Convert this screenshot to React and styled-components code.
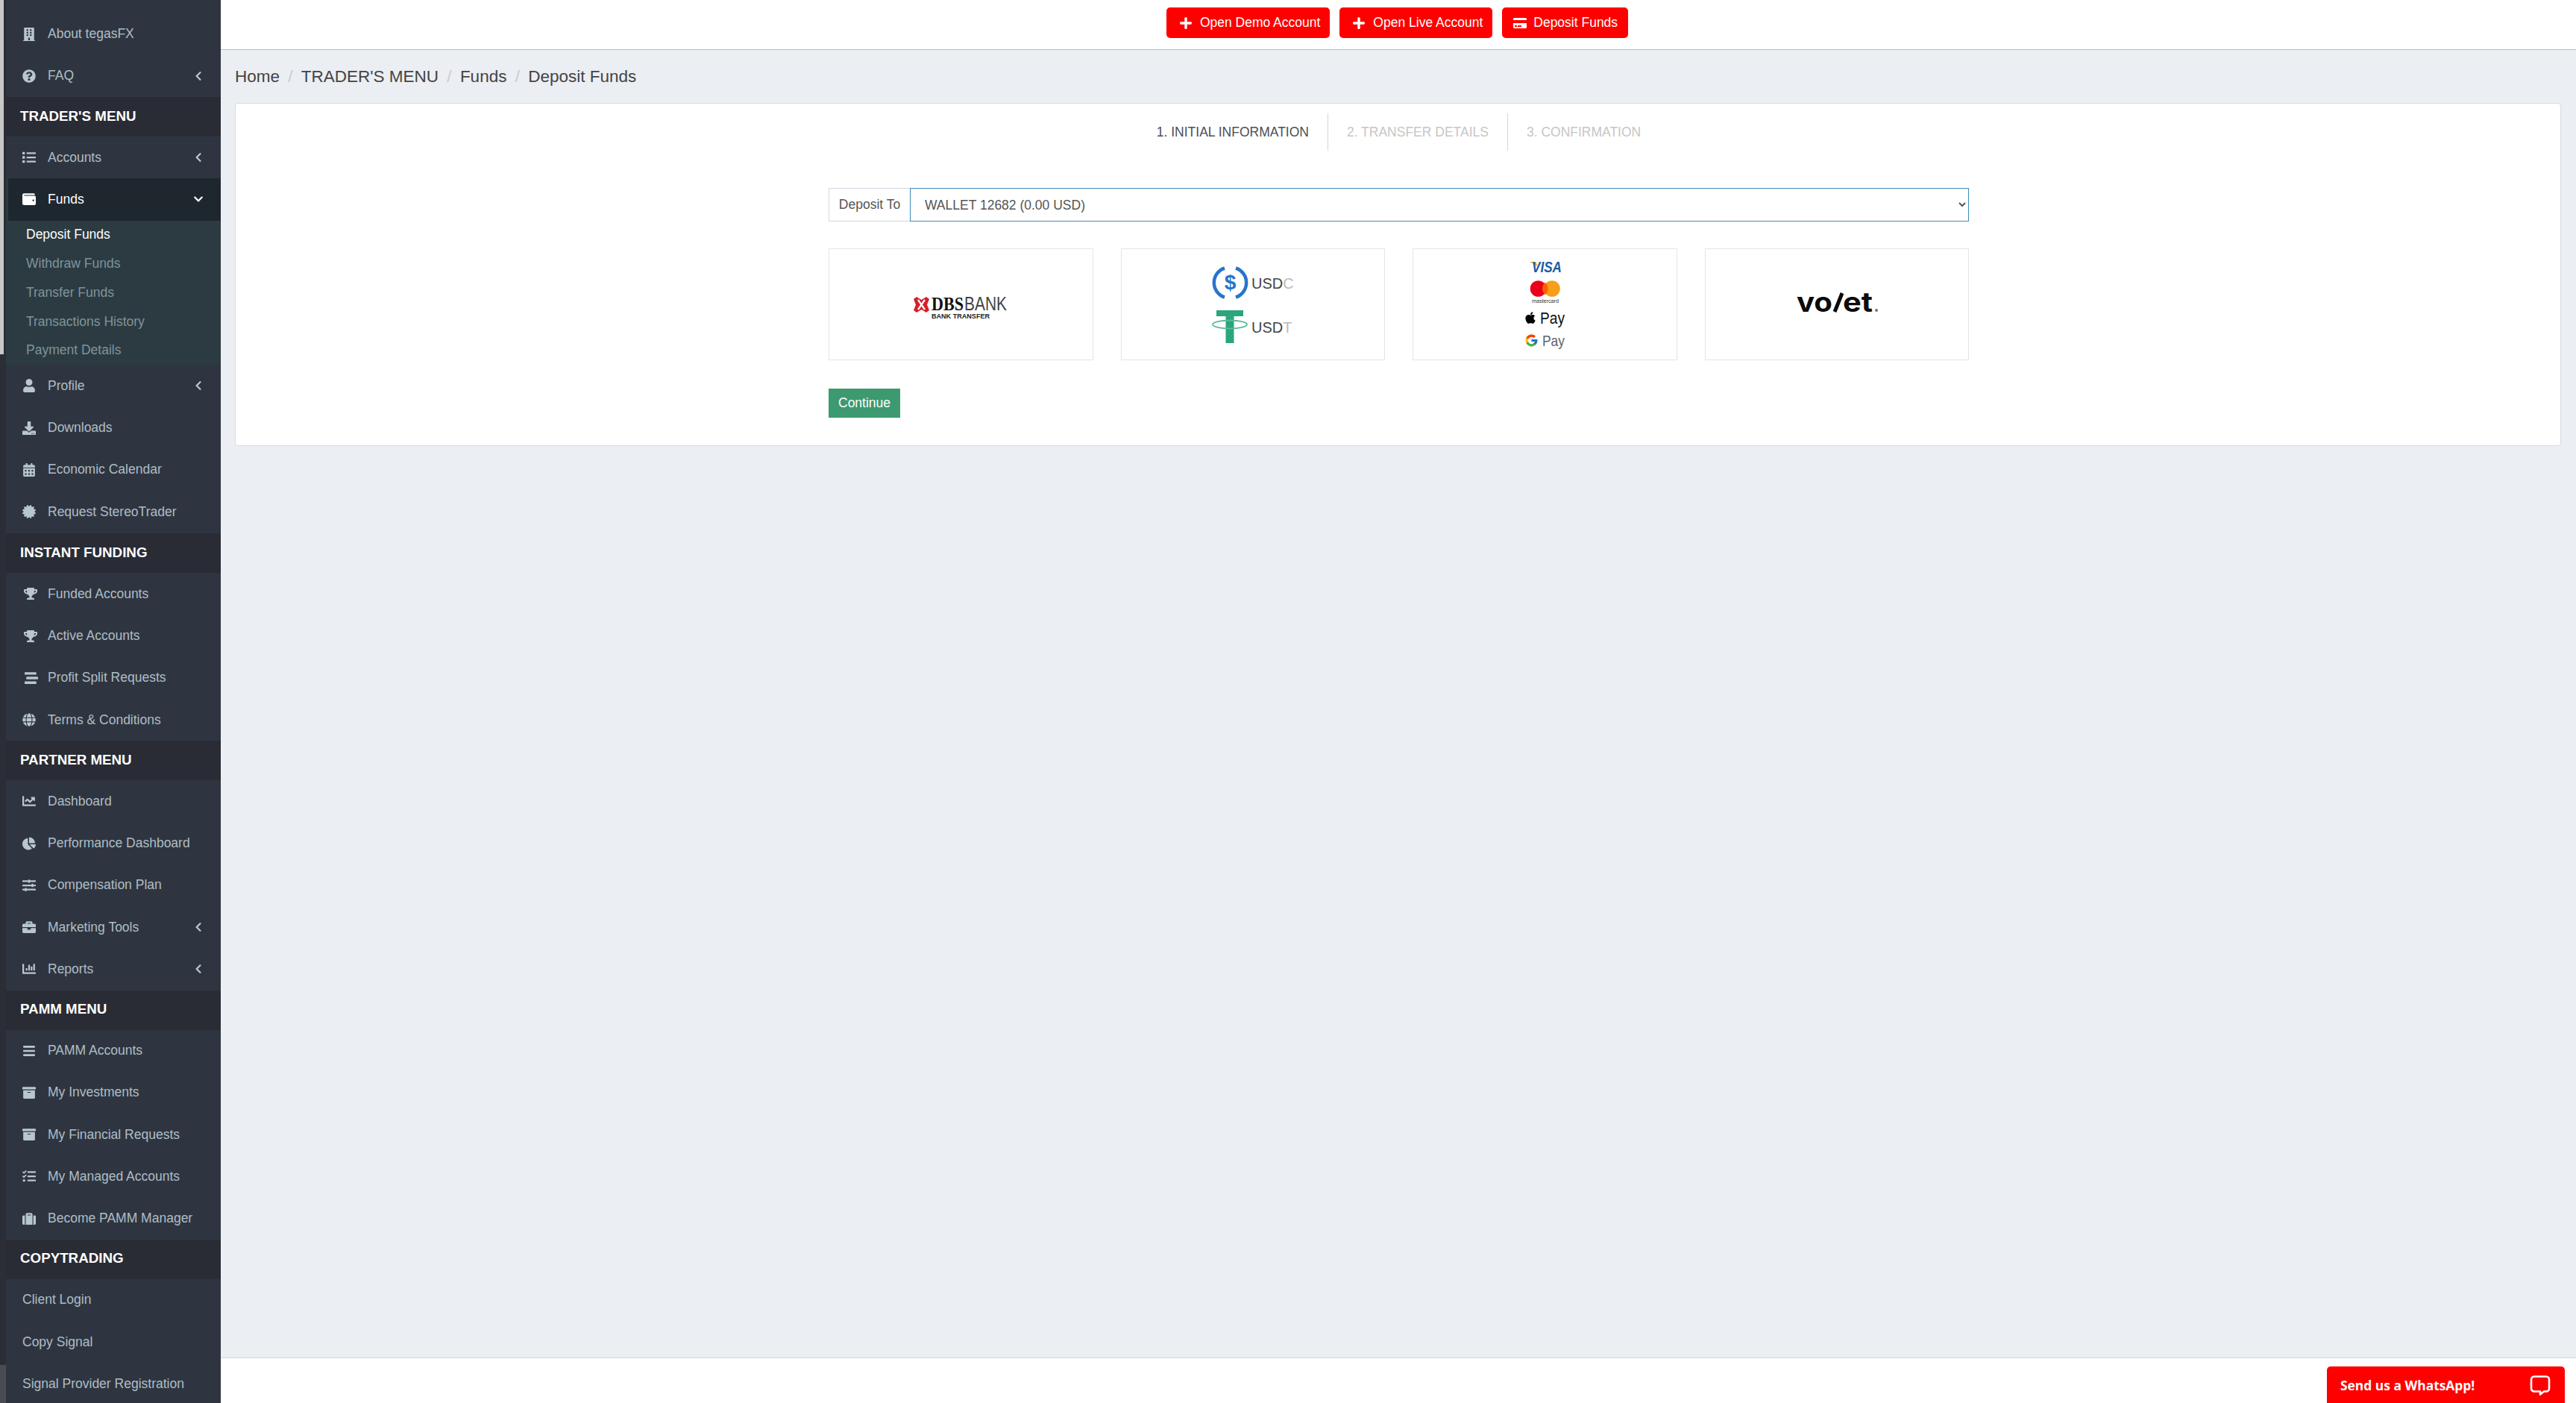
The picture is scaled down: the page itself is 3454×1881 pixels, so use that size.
import React from "react";
import styled, { createGlobalStyle } from "styled-components";
import {
  FaBuilding, FaQuestionCircle, FaChevronLeft, FaChevronDown, FaList, FaWallet, FaUser,
  FaDownload, FaCalendarAlt, FaCertificate, FaTrophy, FaStream, FaGlobe, FaChartLine,
  FaChartPie, FaSlidersH, FaBriefcase, FaChartBar, FaBars, FaArchive, FaTasks, FaSuitcase,
  FaPlus, FaCreditCard, FaApple,
} from "react-icons/fa";
import { FcGoogle } from "react-icons/fc";

const GlobalStyle = createGlobalStyle`
  html, body {
    margin: 0;
    height: 100%;
    overflow: hidden;
    background: #ebeef3;
    font-family: "Liberation Sans", Arial, sans-serif;
  }
`;

const Page = styled.div`
  display: flex;
  height: 1881px;
  overflow: hidden;
`;

const Rail = styled.div`
  width: 8px;
  flex: none;
  display: flex;
  flex-direction: column;
  justify-content: space-between;
  background: #2b2e36;
`;

const RailThumb = styled.div`
  width: ${(p) => p.$w}px;
  height: ${(p) => p.$h}px;
  background: ${(p) => p.$color};
`;

const Sidebar = styled.nav`
  width: 288px;
  flex: none;
  box-sizing: border-box;
  padding-top: 17.5px;
  background: #2f3540;
  overflow: hidden;
  font-size: 17.5px;
`;

const Section = styled.div`
  height: 53px;
  box-sizing: border-box;
  margin-top: ${(p) => p.$offset || 0}px;
  padding: 0 0 2px 19px;
  display: flex;
  align-items: center;
  background: #292c34;
  color: #fff;
  font-size: 18.75px;
  font-weight: 700;
`;

const Row = styled.a`
  height: 56.25px;
  box-sizing: border-box;
  display: flex;
  align-items: center;
  padding-left: ${(p) => (p.$active ? 19 : 22)}px;
  padding-right: 23px;
  color: ${(p) => (p.$active ? "#fff" : "#aebdc6")};
  background: ${(p) => (p.$active ? "#1f272e" : "transparent")};
  border-left: ${(p) => (p.$active ? "3px solid #2c3b41" : "none")};
`;

const IconSlot = styled.span`
  width: 34px;
  padding-left: ${(p) => p.$indent || 0}px;
  box-sizing: border-box;
  flex: none;
  display: flex;
  align-items: center;
  color: ${(p) => (p.$active ? "#fff" : "#b8c7ce")};

  svg {
    height: 18px;
    width: auto;
  }
`;

const Caret = styled.span`
  margin-left: auto;
  display: flex;
  color: ${(p) => (p.$active ? "#fff" : "#b8c7ce")};

  svg {
    height: 14px;
    width: auto;
  }
`;

const SubMenu = styled.div`
  background: #2c3b41;
  padding-left: 27px;
`;

const SubItem = styled.a`
  height: 38.75px;
  display: flex;
  align-items: center;
  color: ${(p) => (p.$active ? "#fff" : "#80939c")};
`;

const Main = styled.div`
  flex: 1;
  min-width: 0;
  display: flex;
  flex-direction: column;
  background: #ebeef3;
`;

const Header = styled.header`
  height: 67px;
  box-sizing: border-box;
  padding: 10px 3px 0 0;
  display: flex;
  justify-content: center;
  gap: 13px;
  background: #fff;
  border-bottom: 1px solid #b9bcc1;
`;

const RedButton = styled.button`
  height: 41px;
  box-sizing: border-box;
  padding: 0 ${(p) => (p.$tight ? 14 : 13)}px 0 ${(p) => (p.$tight ? 15 : 17)}px;
  display: flex;
  align-items: center;
  gap: ${(p) => (p.$tight ? 9 : 10)}px;
  background: #f00;
  color: #fff;
  border: none;
  border-radius: 5px;
  font: 17.5px "Liberation Sans", Arial, sans-serif;

  svg {
    height: 18px;
    width: auto;
  }
`;

const Content = styled.main`
  flex: 1;
  padding: 0 20px 0 19px;
`;

const Breadcrumb = styled.div`
  height: 71px;
  display: flex;
  align-items: center;
  font-size: 22.5px;
  color: #444;
`;

const Slash = styled.span`
  color: #ccc;
  padding: 0 11.25px;
`;

const Panel = styled.section`
  box-sizing: border-box;
  height: 460px;
  padding: 13px 0 0 2px;
  background: #fff;
  border: 1px solid #d7dae0;
  border-radius: 4px;
`;

const Steps = styled.div`
  display: flex;
  justify-content: center;
`;

const Step = styled.div`
  height: 50px;
  padding: 0 25px;
  display: flex;
  align-items: center;
  font-size: 17.5px;
  color: ${(p) => (p.$current ? "#4a4f58" : "#c6c6c6")};
  border-right: ${(p) => (p.$last ? "none" : "1px solid #d2d6de")};
`;

const Form = styled.form`
  width: 1529px;
  margin: 50px auto 0;
`;

const InputGroup = styled.div`
  display: flex;
  height: 45px;
`;

const Addon = styled.label`
  width: 109px;
  box-sizing: border-box;
  flex: none;
  display: flex;
  align-items: center;
  justify-content: center;
  font-size: 17.5px;
  color: #555;
  border: 1px solid #d2d6de;
  border-right: none;
`;

const Select = styled.select`
  flex: 1;
  box-sizing: border-box;
  padding: 0 15px;
  background: #fff;
  border: 1px solid #3c8dbc;
  border-radius: 0;
  outline: none;
  font: 17.5px "Liberation Sans", Arial, sans-serif;
  color: #555;
`;

const Cards = styled.div`
  margin-top: 36px;
  display: grid;
  grid-template-columns: repeat(4, 1fr);
  gap: 37px;
`;

const Card = styled.div`
  height: 150px;
  display: flex;
  align-items: center;
  justify-content: center;
  border: 1px solid #e4e5e8;
  box-sizing: border-box;
`;

const Continue = styled.button`
  margin-top: 38px;
  height: 39px;
  padding: 0 13px;
  background: #3d9970;
  color: #fff;
  border: none;
  font: 17.5px "Liberation Sans", Arial, sans-serif;
`;

const Footer = styled.footer`
  height: 61px;
  box-sizing: border-box;
  padding-right: 15px;
  display: flex;
  justify-content: flex-end;
  align-items: flex-end;
  background: #fff;
  border-top: 1px solid #d2d6de;
`;

const ChatButton = styled.div`
  width: 319px;
  height: 49px;
  box-sizing: border-box;
  padding: 0 19px 0 18px;
  display: flex;
  align-items: center;
  justify-content: space-between;
  background: #f00;
  color: #fff;
  border-radius: 5px 5px 0 0;
  font: 700 17.4px "Open Sans", sans-serif;
`;

const LogoText = styled.text`
  font-family: ${(p) => p.$font || '"Liberation Sans"'}, Arial, sans-serif;
`;

const menu = [
  { label: "About tegasFX", icon: FaBuilding },
  { label: "FAQ", icon: FaQuestionCircle, caret: true },
  { section: "TRADER'S MENU" },
  { label: "Accounts", icon: FaList, caret: true },
  { label: "Funds", icon: FaWallet, active: true },
  { label: "Profile", icon: FaUser, caret: true },
  { label: "Downloads", icon: FaDownload },
  { label: "Economic Calendar", icon: FaCalendarAlt },
  { label: "Request StereoTrader", icon: FaCertificate },
  { section: "INSTANT FUNDING", offset: 1 },
  { label: "Funded Accounts", icon: FaTrophy, indent: 2 },
  { label: "Active Accounts", icon: FaTrophy, indent: 2 },
  { label: "Profit Split Requests", icon: FaStream, indent: 3 },
  { label: "Terms & Conditions", icon: FaGlobe },
  { section: "PARTNER MENU" },
  { label: "Dashboard", icon: FaChartLine },
  { label: "Performance Dashboard", icon: FaChartPie },
  { label: "Compensation Plan", icon: FaSlidersH },
  { label: "Marketing Tools", icon: FaBriefcase, caret: true },
  { label: "Reports", icon: FaChartBar, caret: true },
  { section: "PAMM MENU" },
  { label: "PAMM Accounts", icon: FaBars },
  { label: "My Investments", icon: FaArchive },
  { label: "My Financial Requests", icon: FaArchive },
  { label: "My Managed Accounts", icon: FaTasks },
  { label: "Become PAMM Manager", icon: FaSuitcase },
  { section: "COPYTRADING" },
  { label: "Client Login" },
  { label: "Copy Signal" },
  { label: "Signal Provider Registration" },
];

const fundsMenu = ["Deposit Funds", "Withdraw Funds", "Transfer Funds", "Transactions History", "Payment Details"];

const DbsLogo = () => (
  <svg width="170" height="80" viewBox="1203 368 170 80">
    <path d="M1225 401l4-3 6.500 4 6.500-4 4 3-3 7.500 3 7.500-4 3-6.500-4-6.500 4-4-3 3-7.500z" fill="#d71e28" />
    <path d="M1231 402l9 13M1240 402l-9 13" stroke="#fff" strokeWidth="2.200" />
    <LogoText $font='"Liberation Serif"' x="1249" y="416" fontSize="25" fontWeight="700" fill="#111" textLength="43" lengthAdjust="spacingAndGlyphs">DBS</LogoText>
    <LogoText x="1293" y="416" fontSize="25" fill="#444" textLength="57" lengthAdjust="spacingAndGlyphs">BANK</LogoText>
    <LogoText x="1249" y="427" fontSize="9.500" fontWeight="700" fill="#222" textLength="78" lengthAdjust="spacingAndGlyphs">BANK TRANSFER</LogoText>
  </svg>
);

const CryptoLogo = () => (
  <svg width="140" height="125" viewBox="1610 345 140 125">
    <g fill="none" stroke="#2775ca" strokeWidth="4.500">
      <path d="M1642 358.500A20.500 20.500 0 0 0 1642 397.500" />
      <path d="M1657 358.500A20.500 20.500 0 0 1 1657 397.500" />
    </g>
    <LogoText x="1649.500" y="387" fontSize="28" fontWeight="700" fill="#2775ca" textAnchor="middle">$</LogoText>
    <LogoText x="1678" y="386" fontSize="20" fill="#444">USD<tspan fill="#bbb">C</tspan></LogoText>
    <path d="M1631 415h36v8h-12.500v36h-11v-36h-12.500z" fill="#2ba57c" />
    <ellipse cx="1649" cy="434" rx="23" ry="5.500" fill="none" stroke="#5cbb9a" strokeWidth="1.800" />
    <LogoText x="1678" y="445" fontSize="20" fill="#444">USD<tspan fill="#bbb">T</tspan></LogoText>
  </svg>
);

const CardsLogo = () => (
  <svg width="100" height="135" viewBox="2020 340 100 135">
    <path d="M2050 350h8l3 6z" fill="#f2a91d" />
    <LogoText x="2053" y="364" fontSize="20" fontWeight="700" fontStyle="italic" fill="#1a5ba6" textLength="40" lengthAdjust="spacingAndGlyphs">VISA</LogoText>
    <circle cx="2061.500" cy="386" r="10.800" fill="#eb001b" />
    <circle cx="2080" cy="386" r="10.800" fill="#f79e1b" />
    <path d="M2070.800 377.800a10.800 10.800 0 0 1 0 16.400a10.800 10.800 0 0 1 0-16.400z" fill="#ff5f00" />
    <LogoText x="2053" y="405" fontSize="7" fill="#333" textLength="36" lengthAdjust="spacingAndGlyphs">mastercard</LogoText>
    <FaApple x={2042} y={416} size={18} color="#000" />
    <LogoText x="2064" y="433" fontSize="22" fill="#111" textLength="33" lengthAdjust="spacingAndGlyphs">Pay</LogoText>
    <FcGoogle x={2043} y={446} size={19} />
    <LogoText x="2067" y="463" fontSize="21" fill="#5f6368" textLength="30" lengthAdjust="spacingAndGlyphs">Pay</LogoText>
  </svg>
);

const VoletLogo = () => (
  <svg width="120" height="50" viewBox="2403 383 120 50">
    <LogoText $font="Inter" x="2409" y="418" fontSize="36" fontWeight="700" fill="#0b0b0b" textLength="48" lengthAdjust="spacingAndGlyphs">vo</LogoText>
    <path d="M2460 418l10-25" stroke="#0b0b0b" strokeWidth="5" />
    <LogoText $font="Inter" x="2471" y="418" fontSize="36" fontWeight="700" fill="#0b0b0b" textLength="40" lengthAdjust="spacingAndGlyphs">et</LogoText>
    <circle cx="2516" cy="416" r="2" fill="#777" />
  </svg>
);

const ChatIcon = () => (
  <svg width="28" height="28" viewBox="0 0 28 28" fill="none" stroke="#fff" strokeWidth="2.600" strokeLinejoin="round">
    <path d="M6 2.500h16a4 4 0 0 1 4 4v12a4 4 0 0 1-4 4h-3l-5 4v-4H6a4 4 0 0 1-4-4v-12a4 4 0 0 1 4-4z" />
  </svg>
);

const SideMenu = () => (
  <Sidebar>
    {menu.map((item) => {
      if (item.section) {
        return <Section key={item.section} $offset={item.offset}>{item.section}</Section>;
      }
      const Icon = item.icon;
      return (
        <React.Fragment key={item.label}>
          <Row $active={item.active}>
            {Icon && (
              <IconSlot $active={item.active} $indent={item.indent}>
                <Icon />
              </IconSlot>
            )}
            {item.label}
            {item.caret && <Caret><FaChevronLeft /></Caret>}
            {item.active && <Caret $active><FaChevronDown /></Caret>}
          </Row>
          {item.active && (
            <SubMenu>
              {fundsMenu.map((name, i) => (
                <SubItem key={name} $active={i === 0}>{name}</SubItem>
              ))}
            </SubMenu>
          )}
        </React.Fragment>
      );
    })}
  </Sidebar>
);

export default function App() {
  return (
    <Page>
      <GlobalStyle />
      <Rail>
        <RailThumb $w={5} $h={475} $color="#c8c8c8" />
        <RailThumb $w={8} $h={51} $color="#4a4c54" />
      </Rail>
      <SideMenu />
      <Main>
        <Header>
          <RedButton><FaPlus />Open Demo Account</RedButton>
          <RedButton><FaPlus />Open Live Account</RedButton>
          <RedButton $tight><FaCreditCard />Deposit Funds</RedButton>
        </Header>
        <Content>
          <Breadcrumb>
            Home<Slash>/</Slash>TRADER'S MENU<Slash>/</Slash>Funds<Slash>/</Slash>Deposit Funds
          </Breadcrumb>
          <Panel>
            <Steps>
              <Step $current>1. INITIAL INFORMATION</Step>
              <Step>2. TRANSFER DETAILS</Step>
              <Step $last>3. CONFIRMATION</Step>
            </Steps>
            <Form>
              <InputGroup>
                <Addon>Deposit To</Addon>
                <Select defaultValue="12682">
                  <option value="12682">WALLET 12682 (0.00 USD)</option>
                </Select>
              </InputGroup>
              <Cards>
                <Card><DbsLogo /></Card>
                <Card><CryptoLogo /></Card>
                <Card><CardsLogo /></Card>
                <Card><VoletLogo /></Card>
              </Cards>
              <Continue type="button">Continue</Continue>
            </Form>
          </Panel>
        </Content>
        <Footer>
          <ChatButton>
            Send us a WhatsApp!
            <ChatIcon />
          </ChatButton>
        </Footer>
      </Main>
    </Page>
  );
}
